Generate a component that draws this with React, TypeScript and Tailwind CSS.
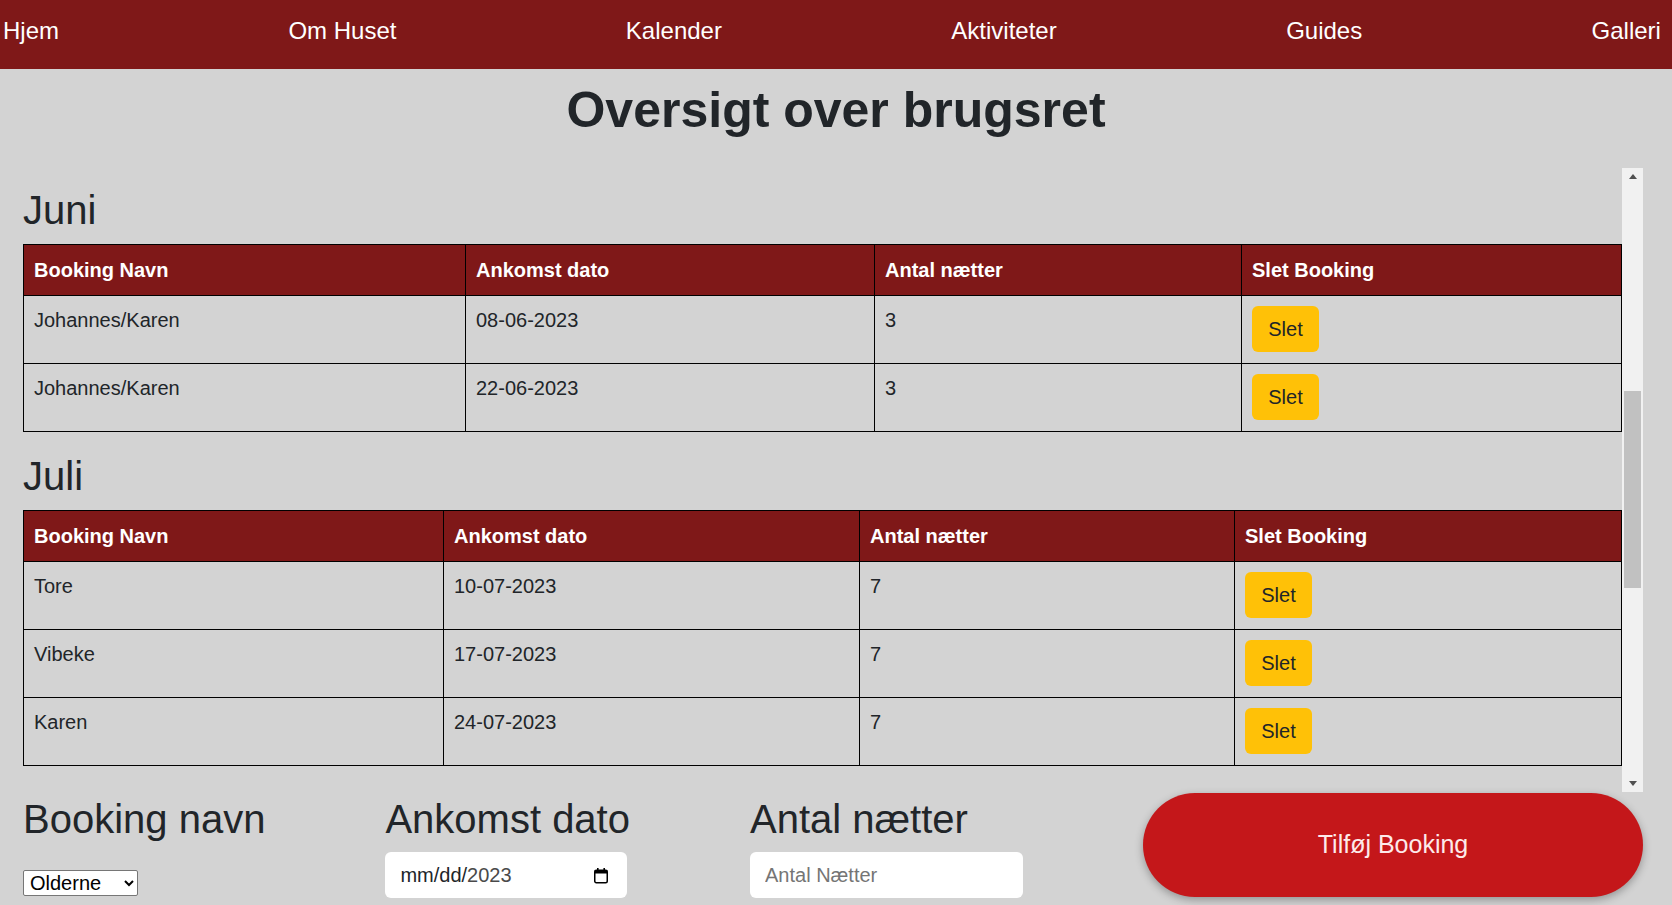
import { useLayoutEffect, useRef } from 'react';

type Booking = { navn: string; dato: string; naetter: number };
type Month = { name: string; widths: string[]; bookings: Booking[] };

const navItems = ['Hjem', 'Om Huset', 'Kalender', 'Aktiviteter', 'Guides', 'Galleri'];

// widths of the first three columns, the last one takes the rest
const wide = ['w-[442px]', 'w-[409px]', 'w-[367px]'];

const months: Month[] = [
  {
    name: 'April',
    widths: wide,
    bookings: [
      { navn: 'Olderne', dato: '06-04-2023', naetter: 4 },
      { navn: 'Tore', dato: '20-04-2023', naetter: 3 },
    ],
  },
  {
    name: 'Maj',
    widths: wide,
    bookings: [
      { navn: 'Vibeke', dato: '01-05-2023', naetter: 5 },
      { navn: 'Karen', dato: '12-05-2023', naetter: 3 },
      { navn: 'Olderne', dato: '17-05-2023', naetter: 4 },
      { navn: 'Tore', dato: '26-05-2023', naetter: 2 },
    ],
  },
  {
    name: 'Juni',
    widths: wide,
    bookings: [
      { navn: 'Johannes/Karen', dato: '08-06-2023', naetter: 3 },
      { navn: 'Johannes/Karen', dato: '22-06-2023', naetter: 3 },
    ],
  },
  {
    name: 'Juli',
    widths: ['w-[420px]', 'w-[416px]', 'w-[375px]'],
    bookings: [
      { navn: 'Tore', dato: '10-07-2023', naetter: 7 },
      { navn: 'Vibeke', dato: '17-07-2023', naetter: 7 },
      { navn: 'Karen', dato: '24-07-2023', naetter: 7 },
    ],
  },
  {
    name: 'August',
    widths: wide,
    bookings: [
      { navn: 'Olderne', dato: '04-08-2023', naetter: 7 },
      { navn: 'Johannes/Karen', dato: '18-08-2023', naetter: 4 },
    ],
  },
  {
    name: 'September',
    widths: wide,
    bookings: [
      { navn: 'Vibeke', dato: '01-09-2023', naetter: 3 },
      { navn: 'Tore', dato: '15-09-2023', naetter: 2 },
      { navn: 'Karen', dato: '22-09-2023', naetter: 3 },
    ],
  },
];

function MonthTable({ month, headingRef }: { month: Month; headingRef?: React.Ref<HTMLHeadingElement> }) {
  return (
    <section className="pt-[20px] first:pt-0">
      <h2 ref={headingRef} className="text-[40px] leading-[48px] mb-[10px] text-[#212529]">
        {month.name}
      </h2>
      <table className="w-full table-fixed border-collapse text-[20px]">
        <colgroup>
          {month.widths.map((w, i) => (
            <col key={i} className={w} />
          ))}
          <col />
        </colgroup>
        <thead>
          <tr className="bg-[#7f1818] text-white">
            <th className="border border-black px-[10px] py-[13px] text-left font-bold leading-[24px]">Booking Navn</th>
            <th className="border border-black px-[10px] py-[13px] text-left font-bold leading-[24px]">Ankomst dato</th>
            <th className="border border-black px-[10px] py-[13px] text-left font-bold leading-[24px]">Antal nætter</th>
            <th className="border border-black px-[10px] py-[13px] text-left font-bold leading-[24px]">Slet Booking</th>
          </tr>
        </thead>
        <tbody className="text-[#212529]">
          {month.bookings.map((b, i) => (
            <tr key={i}>
              <td className="border border-black px-[10px] pt-[10px] pb-[11px] align-top leading-[28px]">{b.navn}</td>
              <td className="border border-black px-[10px] pt-[10px] pb-[11px] align-top leading-[28px]">{b.dato}</td>
              <td className="border border-black px-[10px] pt-[10px] pb-[11px] align-top leading-[28px]">{b.naetter}</td>
              <td className="border border-black px-[10px] pt-[10px] pb-[11px] align-top">
                <button className="h-[46px] w-[67px] rounded-md bg-[#ffc107] text-[20px] text-[#212529] cursor-pointer">
                  Slet
                </button>
              </td>
            </tr>
          ))}
        </tbody>
      </table>
    </section>
  );
}

function CalendarIcon() {
  return (
    <svg width="16" height="17" viewBox="0 0 16 17">
      <rect x="1.75" y="3.25" width="12.5" height="12.5" rx="1.5" fill="none" stroke="#000" strokeWidth="1.5" />
      <rect x="1.75" y="3.25" width="12.5" height="3.25" fill="#000" />
      <rect x="4" y="1" width="1.6" height="3" fill="#000" />
      <rect x="10.4" y="1" width="1.6" height="3" fill="#000" />
    </svg>
  );
}

// scrollbar like the windows one in the screenshot (headless uses overlay bars)
function ScrollBar() {
  return (
    <div className="flex w-[21px] shrink-0 flex-col items-center bg-[#f1f1f1]">
      <div className="flex h-[17px] w-full items-center justify-center">
        <span className="h-0 w-0 border-x-[4px] border-b-[5px] border-x-transparent border-b-[#505050]" />
      </div>
      <div className="mt-[206px] h-[197px] w-[17px] bg-[#c1c1c1]" />
      <div className="mt-auto flex h-[17px] w-full items-center justify-center">
        <span className="h-0 w-0 border-x-[4px] border-t-[5px] border-x-transparent border-t-[#505050]" />
      </div>
    </div>
  );
}

function App() {
  const scrollRef = useRef<HTMLDivElement>(null);
  const juniRef = useRef<HTMLHeadingElement>(null);

  useLayoutEffect(() => {
    if (scrollRef.current && juniRef.current) {
      scrollRef.current.scrollTop = juniRef.current.offsetTop - 18;
    }
  }, []);

  return (
    <div className="min-h-screen bg-[#d3d3d3] font-['Liberation_Sans',Arial,sans-serif] pb-[20px]">
      <nav className="h-[69px] bg-[#7f1818] pt-[14px] pl-[3px] pr-[11px]">
        <ul className="flex justify-between text-[24px] leading-[34px] text-white">
          {navItems.map((item) => (
            <li key={item}>
              <a href="#">{item}</a>
            </li>
          ))}
        </ul>
      </nav>

      <h1 className="mt-[11px] text-center text-[50px] font-bold leading-[60px] text-[#212529]">Oversigt over brugsret</h1>

      <div className="ml-[23px] mr-[29px] mt-[28px] flex h-[624px]">
        <div ref={scrollRef} className="relative flex-1 overflow-hidden">
          {months.map((m) => (
            <MonthTable key={m.name} month={m} headingRef={m.name === 'Juni' ? juniRef : undefined} />
          ))}
        </div>
        <ScrollBar />
      </div>

      <form className="ml-[23px] mr-[29px] mt-[1px] flex items-start gap-[120px]" onSubmit={(e) => e.preventDefault()}>
        <div className="flex flex-col pt-[2px]">
          <label className="text-[40px] leading-[48px] text-[#212529]">Booking navn</label>
          <select className="mt-[27px] h-[26px] w-[115px] rounded-[2px] border border-[#767676] bg-white px-[2px] text-[20px] text-black">
            <option>Olderne</option>
            <option>Tore</option>
            <option>Vibeke</option>
            <option>Karen</option>
            <option>Johannes/Karen</option>
          </select>
        </div>
        <div className="flex flex-col pt-[2px]">
          <label className="text-[40px] leading-[48px] text-[#212529]">Ankomst dato</label>
          <div className="mt-[9px] flex h-[46px] w-[242px] items-center justify-between rounded-md bg-white pl-[15px] pr-[18px] text-[20px]">
            <span>
              <span className="text-[#212529]">mm/dd/</span>
              <span className="text-[#4a4a4a]">2023</span>
            </span>
            <CalendarIcon />
          </div>
        </div>
        <div className="flex flex-col pt-[2px]">
          <label className="text-[40px] leading-[48px] text-[#212529]">Antal nætter</label>
          <input
            type="number"
            placeholder="Antal Nætter"
            className="mt-[9px] h-[46px] w-[273px] rounded-md bg-white pl-[15px] text-[20px] text-[#212529] placeholder:text-[#757575] outline-none"
          />
        </div>
        <button
          type="submit"
          className="ml-auto h-[104px] w-[500px] rounded-full bg-[#c4171a] text-[25px] text-[#fdeaea] shadow-[0_3px_8px_rgba(0,0,0,0.3)] cursor-pointer"
        >
          Tilføj Booking
        </button>
      </form>
    </div>
  );
}

export default App;
